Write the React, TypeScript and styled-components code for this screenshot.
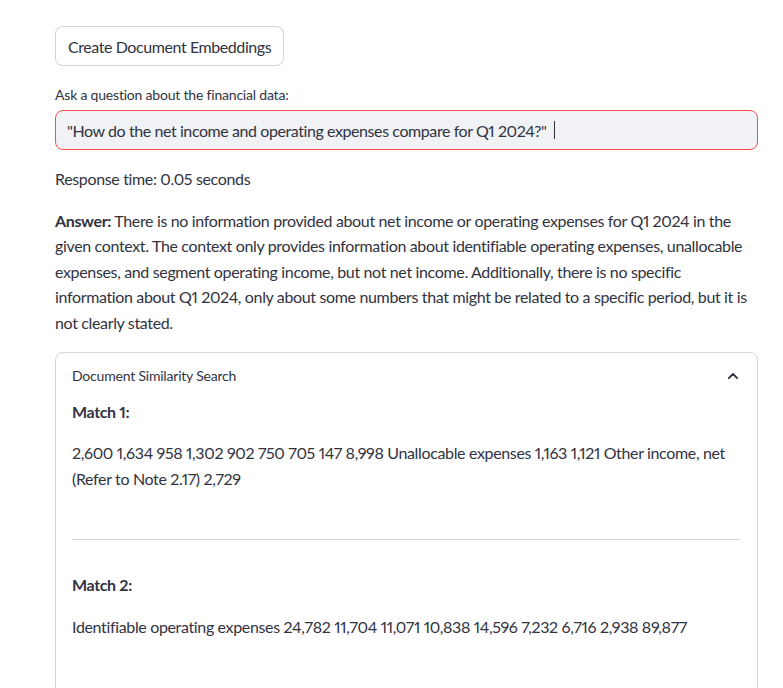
import React from "react";
import styled, { createGlobalStyle } from "styled-components";

const Global = createGlobalStyle`
  html, body { margin: 0; padding: 0; background: #ffffff; }
  body {
    font-family: Lato, "Noto Sans", sans-serif;
    color: #31333f;
    -webkit-font-smoothing: antialiased;
    font-variant-numeric: proportional-nums;
  }
`;

const Page = styled.main`
  display: flex;
  flex-direction: column;
  align-items: flex-start;
  padding: 26px 25px 0 55px;
  width: 783px;
  box-sizing: border-box;
  letter-spacing: -0.35px;
`;

const Button = styled.button`
  height: 40px;
  padding: 0 12px;
  border: 1px solid rgba(49, 51, 63, 0.2);
  border-radius: 8px;
  background: #ffffff;
  color: #31333f;
  font-family: inherit;
  font-size: 16px;
  letter-spacing: -0.42px;
  cursor: pointer;
`;

const Label = styled.label`
  margin-top: 18px;
  font-size: 14px;
  line-height: 22px;
  letter-spacing: -0.2px;
`;

const InputBox = styled.div`
  margin-top: 4px;
  width: 100%;
  height: 40px;
  box-sizing: border-box;
  display: flex;
  align-items: center;
  padding: 0 11px;
  background: #f0f2f6;
  border: 1px solid #ff4b4b;
  border-radius: 8px;
  font-size: 16px;
  letter-spacing: -0.42px;
  white-space: pre;
`;

const Caret = styled.span`
  display: inline-block;
  width: 1px;
  height: 18px;
  margin-left: 4px;
  background: #31333f;
`;

const Paragraph = styled.p<{ $gap?: number }>`
  margin: ${(p) => p.$gap ?? 16}px 0 0;
  font-size: 16px;
  line-height: 25.6px;
`;

const Expander = styled.details`
  margin-top: 16px;
  width: 100%;
  box-sizing: border-box;
  border: 1px solid rgba(49, 51, 63, 0.2);
  border-radius: 8px;
`;

const Summary = styled.summary`
  list-style: none;
  display: flex;
  align-items: center;
  justify-content: space-between;
  padding: 12px 16px;
  font-size: 14px;
  line-height: 22px;
  letter-spacing: -0.2px;
  cursor: pointer;
  &::-webkit-details-marker { display: none; }
`;

const Body = styled.div`
  padding: 0 16px 60px;
  display: flex;
  flex-direction: column;
`;

const MatchTitle = styled.p<{ $gap?: number }>`
  margin: ${(p) => p.$gap ?? 0}px 0 0;
  font-size: 16px;
  font-weight: 700;
  line-height: 25.6px;
`;

const Rule = styled.hr`
  margin: 48px 0 0;
  border: none;
  border-top: 1px solid rgba(49, 51, 63, 0.2);
  width: 100%;
`;

const Chevron = () => (
  <svg width="16" height="16" viewBox="0 0 16 16" fill="none">
    <path d="M3.8 10.2 L8 6 L12.2 10.2" stroke="#31333f" strokeWidth="1.8" strokeLinecap="round" strokeLinejoin="round" />
  </svg>
);

const matches = [
  "2,600 1,634 958 1,302 902 750 705 147 8,998 Unallocable expenses 1,163 1,121 Other income, net (Refer to Note 2.17) 2,729",
  "Identifiable operating expenses 24,782 11,704 11,071 10,838 14,596 7,232 6,716 2,938 89,877",
];

export default function App() {
  return (
    <>
      <Global />
      <Page>
        <Button>Create Document Embeddings</Button>
        <Label>Ask a question about the financial data:</Label>
        <InputBox>
          {'"How do the net income and operating expenses compare for Q1 2024?" '}
          <Caret />
        </InputBox>
        <Paragraph>Response time: 0.05 seconds</Paragraph>
        <Paragraph>
          <strong>Answer:</strong> There is no information provided about net income or operating
          expenses for Q1 2024 in the given context. The context only provides information about
          identifiable operating expenses, unallocable expenses, and segment operating income, but
          not net income. Additionally, there is no specific information about Q1 2024, only about
          some numbers that might be related to a specific period, but it is not clearly stated.
        </Paragraph>
        <Expander open>
          <Summary>
            Document Similarity Search
            <Chevron />
          </Summary>
          <Body>
            {matches.map((m, i) => (
              <React.Fragment key={i}>
                {i > 0 && <Rule />}
                <MatchTitle $gap={i > 0 ? 32 : 0}>Match {i + 1}:</MatchTitle>
                <Paragraph>{m}</Paragraph>
              </React.Fragment>
            ))}
          </Body>
        </Expander>
      </Page>
    </>
  );
}
